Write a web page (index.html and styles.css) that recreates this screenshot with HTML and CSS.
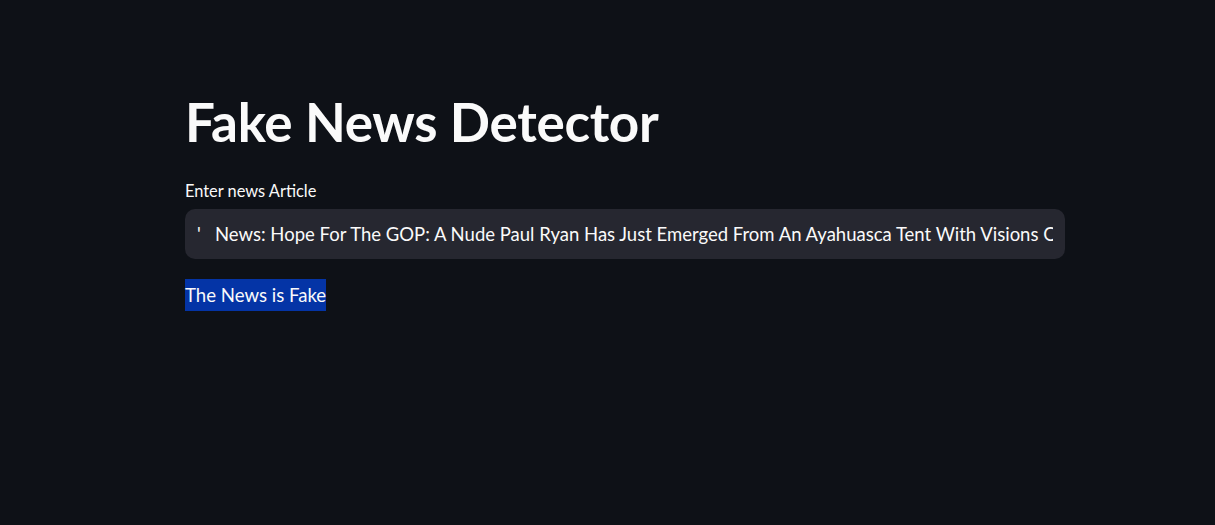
FILE: index.html
```html
<!DOCTYPE html>
<html lang="en">
<head>
<meta charset="utf-8">
<title>Fake News Detector</title>
<link rel="stylesheet" href="styles.css">
</head>
<body>
<main class="app">
  <section class="block">
    <h1 class="title">Fake News Detector</h1>
    <label class="field">
      <span class="field-label">Enter news Article</span>
      <input class="field-input" type="text" value="'   News: Hope For The GOP: A Nude Paul Ryan Has Just Emerged From An Ayahuasca Tent With Visions Of America's Future">
    </label>
    <p class="result"><span class="result-mark">The News is Fake</span></p>
  </section>
</main>
</body>
</html>
```

FILE: styles.css
```css
html, body {
  margin: 0;
  padding: 0;
  background: #0e1117;
  color: #fafafa;
  font-family: Lato, "Noto Sans", sans-serif;
}

.app {
  display: flex;
  justify-content: center;
  padding-left: 35px;
  min-height: 525px;
}

.block {
  width: 880px;
  padding-top: 86px;
  display: flex;
  flex-direction: column;
}

.title {
  margin: 0;
  font-size: 53px;
  font-weight: 700;
  line-height: 72px;
  letter-spacing: -0.3px;
}

.field {
  display: flex;
  flex-direction: column;
  margin-top: 21px;
}

.field-label {
  font-size: 16.4px;
  line-height: 24px;
  height: 24px;
}

.field-input {
  margin-top: 6px;
  height: 50px;
  box-sizing: border-box;
  border: none;
  outline: none;
  border-radius: 10px;
  background: #262730;
  color: #fafafa;
  font-family: inherit;
  font-size: 18.5px;
  padding: 0 12px;
}

.result {
  margin: 20px 0 0;
  font-size: 18.6px;
  line-height: 32px;
}

.result-mark {
  background: #0434a6;
  display: inline-block;
}
```
